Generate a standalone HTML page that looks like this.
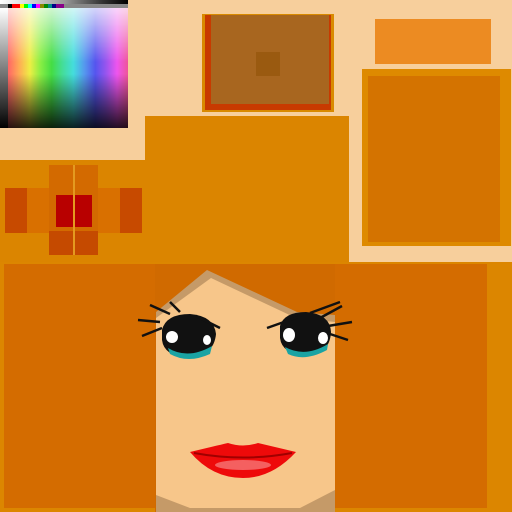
<!DOCTYPE html>
<html><head><style>
*{margin:0;padding:0}
body{width:512px;height:512px;background:#f7cf9c;position:relative;overflow:hidden}
div{position:absolute}
</style></head><body>
<div style="left:0;top:0;width:128px;height:4px;background:linear-gradient(90deg,#fff,#ddd 20%,#999 50%,#333 80%,#000)"></div>
<div style="left:0;top:4px;width:128px;height:4px;background:linear-gradient(90deg,#888 0 8px,#000 8px 12px,#f00 12px 20px,#ff0 20px 24px,#0f0 24px 28px,#0ff 28px 32px,#00f 32px 36px,#f0f 36px 40px,#880 40px 44px,#080 44px 48px,#088 48px 52px,#008 52px 56px,#808 56px 64px,#888 64px)"></div>
<div style="left:8px;top:8px;width:120px;height:120px;background:linear-gradient(180deg,rgba(255,255,255,.75),rgba(255,255,255,0) 45%,rgba(0,0,0,0) 55%,rgba(0,0,0,.85)),linear-gradient(90deg,#f66,#fa5,#ee4,#8e4,#4d4,#4d9,#4dd,#59e,#55e,#95e,#e5e,#e59)"></div>
<div style="left:0;top:8px;width:8px;height:120px;background:linear-gradient(#fff,#000)"></div>
<div style="left:202px;top:14px;width:132px;height:98px;background:#d98a00"></div>
<div style="left:205px;top:15px;width:126px;height:95px;background:#c83a00"></div>
<div style="left:211px;top:15px;width:118px;height:89px;background:#a8661f"></div>
<div style="left:256px;top:52px;width:24px;height:24px;background:#9a5a10"></div>
<div style="left:375px;top:19px;width:116px;height:45px;background:#ec8b22"></div>
<div style="left:362px;top:69px;width:149px;height:177px;background:#de8a00"></div>
<div style="left:368px;top:76px;width:132px;height:166px;background:#d47300"></div>
<div style="left:145px;top:116px;width:204px;height:148px;background:#db8500"></div>
<div style="left:0;top:160px;width:145px;height:104px;background:#db8500"></div>
<div style="left:5px;top:188px;width:136px;height:45px;background:#d97000"></div>
<div style="left:5px;top:188px;width:22px;height:45px;background:#c74a00"></div>
<div style="left:120px;top:188px;width:22px;height:45px;background:#c74a00"></div>
<div style="left:49px;top:165px;width:49px;height:90px;background:#d36a00"></div>
<div style="left:49px;top:231px;width:49px;height:24px;background:#c54a00"></div>
<div style="left:56px;top:195px;width:36px;height:32px;background:#b80000"></div>
<div style="left:73px;top:165px;width:2px;height:90px;background:#e49a20"></div>
<div style="left:0;top:262px;width:512px;height:250px;background:#dc8600"></div>
<div style="left:4px;top:264px;width:151px;height:244px;background:#d46c00"></div>
<div style="left:335px;top:264px;width:152px;height:244px;background:#d46c00"></div>
<div style="left:155px;top:264px;width:180px;height:248px;background:#d06a00"></div>
<svg style="position:absolute;left:0;top:0" width="512" height="512">
<polygon points="156,312 207,270 297,312 335,315 335,512 156,512" fill="#c59a68"/>
<polygon points="156,318 211,278 296,318 335,322 335,490 300,508 190,508 156,495" fill="#f7c68a"/>
<g>
<path d="M162 330 Q166 314 190 314 Q214 316 216 334 Q214 356 188 358 Q164 356 162 340Z" fill="#111"/>
<path d="M168 348 Q188 360 212 346 L210 354 Q188 364 170 354Z" fill="#1aa3a3"/>
<ellipse cx="172" cy="337" rx="6" ry="6" fill="#fff"/>
<ellipse cx="207" cy="340" rx="4" ry="5" fill="#fff"/>
<path d="M160 322 L138 320 M162 328 L142 336 M170 314 L150 305 M180 312 L170 302 M196 316 L220 328" stroke="#111" stroke-width="2.5" fill="none"/>
<path d="M280 326 Q284 312 306 312 Q330 314 331 332 Q330 354 306 356 Q282 354 280 338Z" fill="#111"/>
<path d="M285 347 Q305 358 328 344 L327 350 Q305 362 288 354Z" fill="#1aa3a3"/>
<ellipse cx="289" cy="335" rx="6" ry="7" fill="#fff"/>
<ellipse cx="323" cy="338" rx="5" ry="6" fill="#fff"/>
<path d="M298 317 L267 328 M310 313 L340 302 M320 318 L342 306 M328 326 L352 322 M330 334 L348 340" stroke="#111" stroke-width="2.5" fill="none"/>
</g>
<path d="M190 452 Q215 446 228 443 Q243 448 258 443 Q275 447 296 452 Q272 478 243 478 Q212 478 190 452Z" fill="#ee0a0a"/>
<path d="M194 453 Q243 462 292 453" stroke="#a00000" stroke-width="2" fill="none"/>
<ellipse cx="243" cy="465" rx="28" ry="5" fill="#f46060"/>
</svg>
</body></html>
